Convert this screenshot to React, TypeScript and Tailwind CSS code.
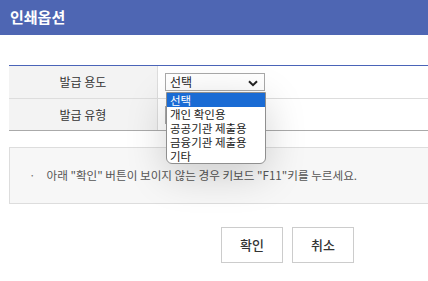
import React from 'react';

const options = ['선택', '개인 확인용', '공공기관 제출용', '금융기관 제출용', '기타'];

const Chevron = () => (
  <svg width="10" height="7" viewBox="0 0 10 7" className="absolute right-[6px] top-[6px]">
    <path d="M1 1.2 L5 5.2 L9 1.2" fill="none" stroke="#222" strokeWidth="2" />
  </svg>
);

const SelectBox = ({ label }: { label: string }) => (
  <div className="relative h-[18px] w-[100px] border border-[#a9a9a9] bg-white pl-[4px] text-[12px] leading-[16px] text-[#222]">
    {label}
    <Chevron />
  </div>
);

const App = () => {
  return (
    <main className="h-[281px] w-[428px] overflow-hidden bg-white font-['Noto_Sans_CJK_KR',sans-serif]">
      <div className="flex h-[35px] items-center bg-[#4e66b3] pl-[10px] text-[15px] font-bold text-white">
        인쇄옵션
      </div>

      <div className="relative ml-[9px] mt-[30px]">
        <div className="border-t border-[#4a64b8] border-b border-b-[#aaaaaa]">
          <div className="flex h-[33px] border-b border-[#dddddd]">
            <div className="flex w-[149px] items-center justify-center border-r border-[#dddddd] bg-[#f3f3f3] text-[12px] text-[#333]">
              발급 용도
            </div>
            <div className="flex items-center pl-[7px]">
              <SelectBox label="선택" />
            </div>
          </div>
          <div className="flex h-[31px]">
            <div className="flex w-[149px] items-center justify-center border-r border-[#dddddd] bg-[#f3f3f3] text-[12px] text-[#333]">
              발급 유형
            </div>
            <div className="flex items-center pl-[7px]">
              <SelectBox label="" />
            </div>
          </div>
        </div>

        {/* open dropdown list */}
        <ul className="absolute left-[157px] top-[27px] z-10 w-[100px] overflow-hidden rounded-b-[6px] border border-[#8f8f8f] bg-white text-[11.5px] leading-[14px] text-[#222] shadow-[0_10px_40px_rgba(0,0,0,0.18)]">
          {options.map((o, i) => (
            <li key={o} className={i === 0 ? 'bg-[#1a6bd4] pl-[3px] text-white' : 'pl-[3px]'}>
              {o}
            </li>
          ))}
        </ul>

        <div className="mt-[16px] flex h-[57px] items-center border border-r-0 border-[#dddddd] bg-[#f7f7f7] pl-[19px] text-[11.6px] text-[#555]">
          <span className="mr-[11px] text-[#777]">·</span>
          아래 "확인" 버튼이 보이지 않는 경우 키보드 "F11"키를 누르세요.
        </div>
      </div>

      <div className="mt-[23px] flex gap-[9px] pl-[221px]">
        <button className="h-[36px] w-[62px] border border-[#cccccc] bg-white text-[13px] font-medium text-[#333]">확인</button>
        <button className="h-[36px] w-[62px] border border-[#cccccc] bg-white text-[13px] font-medium text-[#333]">취소</button>
      </div>
    </main>
  );
};

export default App;
